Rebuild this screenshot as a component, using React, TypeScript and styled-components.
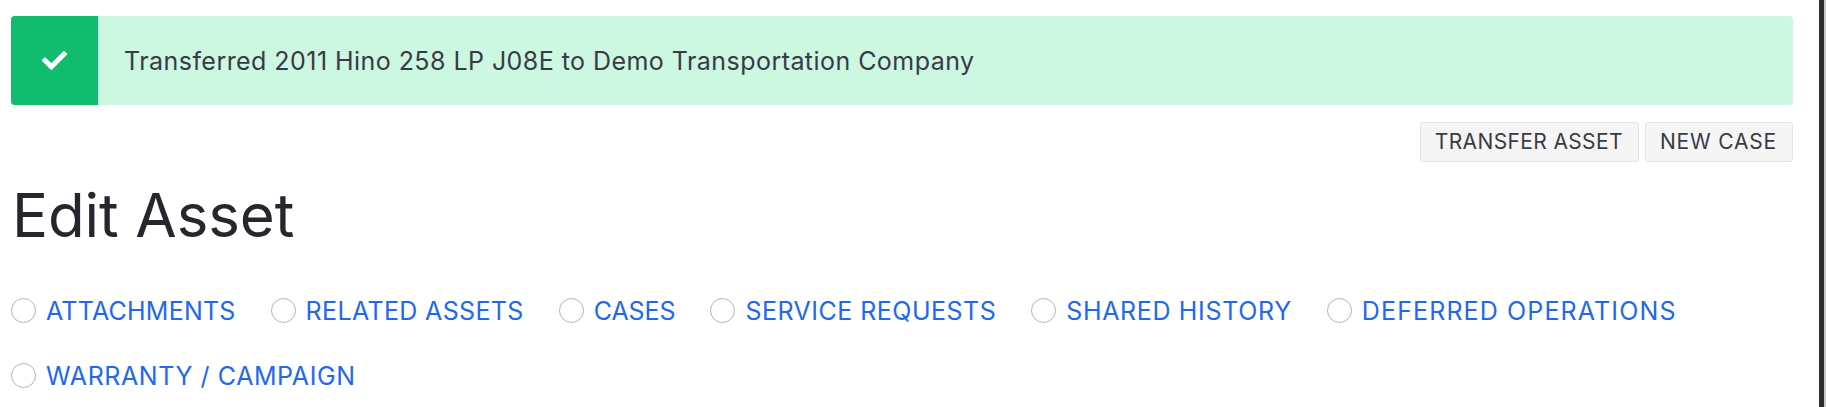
import { createGlobalStyle } from "styled-components"
import styled from "styled-components"
import { FaCheck } from "react-icons/fa"

const GlobalStyle = createGlobalStyle`
    html, body {
        margin: 0;
        padding: 0;
        background: #fff;
        overflow: hidden;
    }
    body {
        font-family: "Inter", "Liberation Sans", sans-serif;
    }
`

const Frame = styled.div`
    display: flex;
    height: 407px;
`
const Page = styled.div`
    flex: 1;
    padding: 16px 26px 0 11px;
`
const Scrollbar = styled.div`
    width: 7px;
    background: #2e2e2e;
    border-right: 2px solid #c8c8c8;
    box-sizing: border-box;
`
const Alert = styled.div`
    display: flex;
    height: 89px;
    background: #ccf7e0;
    border-radius: 4px;
    overflow: hidden;
`
const AlertIcon = styled.div`
    display: flex;
    align-items: center;
    justify-content: center;
    width: 87px;
    background: #12bc6e;
    color: #fff;
    font-size: 25px;
`
const AlertText = styled.p`
    margin: 0;
    padding-left: 26px;
    align-self: center;
    font-size: 25px;
    letter-spacing: 0.45px;
    color: #3a3a44;
`
const Actions = styled.div`
    display: flex;
    justify-content: flex-end;
    gap: 6px;
    margin-top: 17px;
`
const ActionButton = styled.button<{ $tracking: number }>`
    height: 40px;
    padding: 0 15px 1px 14px;
    background: #f5f5f5;
    border: 1px solid #e4e4e4;
    border-radius: 3px;
    font-family: inherit;
    font-size: 21px;
    letter-spacing: ${p => p.$tracking}px;
    color: #3a3a44;
`
const Title = styled.h1`
    margin: 13px 0 0;
    padding-left: 1px;
    font-size: 60px;
    line-height: 80px;
    font-weight: 400;
    letter-spacing: -0.1px;
    color: #26262e;
`
const Tabs = styled.div`
    display: flex;
    flex-wrap: wrap;
    gap: 0 35px;
    margin-top: 23px;
`
const Tab = styled.label<{ $tracking: number }>`
    display: flex;
    align-items: center;
    gap: 10px;
    height: 65px;
    font-size: 25px;
    letter-spacing: ${p => p.$tracking}px;
    color: #2268ee;
`
const Radio = styled.span`
    width: 23px;
    height: 23px;
    border: 1px solid #b4b4b4;
    border-radius: 50%;
`

// tracking per label, the stand-in font runs narrower on some letters
const tabs = [
    { label: "ATTACHMENTS", tracking: 0.22 },
    { label: "RELATED ASSETS", tracking: 0.36 },
    { label: "CASES", tracking: -0.1 },
    { label: "SERVICE REQUESTS", tracking: 0.48 },
    { label: "SHARED HISTORY", tracking: 0.66 },
    { label: "DEFERRED OPERATIONS", tracking: 1.13 },
    { label: "WARRANTY / CAMPAIGN", tracking: 0.58 },
]

export default function App() {
    return (
        <Frame>
            <GlobalStyle />
            <Page>
                <Alert>
                    <AlertIcon>
                        <FaCheck />
                    </AlertIcon>
                    <AlertText>Transferred 2011 Hino 258 LP J08E to Demo Transportation Company</AlertText>
                </Alert>
                <Actions>
                    <ActionButton $tracking={0.37}>TRANSFER ASSET</ActionButton>
                    <ActionButton $tracking={0.82}>NEW CASE</ActionButton>
                </Actions>
                <Title>Edit Asset</Title>
                <Tabs>
                    {tabs.map(t => (
                        <Tab key={t.label} $tracking={t.tracking}>
                            <Radio />
                            {t.label}
                        </Tab>
                    ))}
                </Tabs>
            </Page>
            <Scrollbar />
        </Frame>
    )
}
